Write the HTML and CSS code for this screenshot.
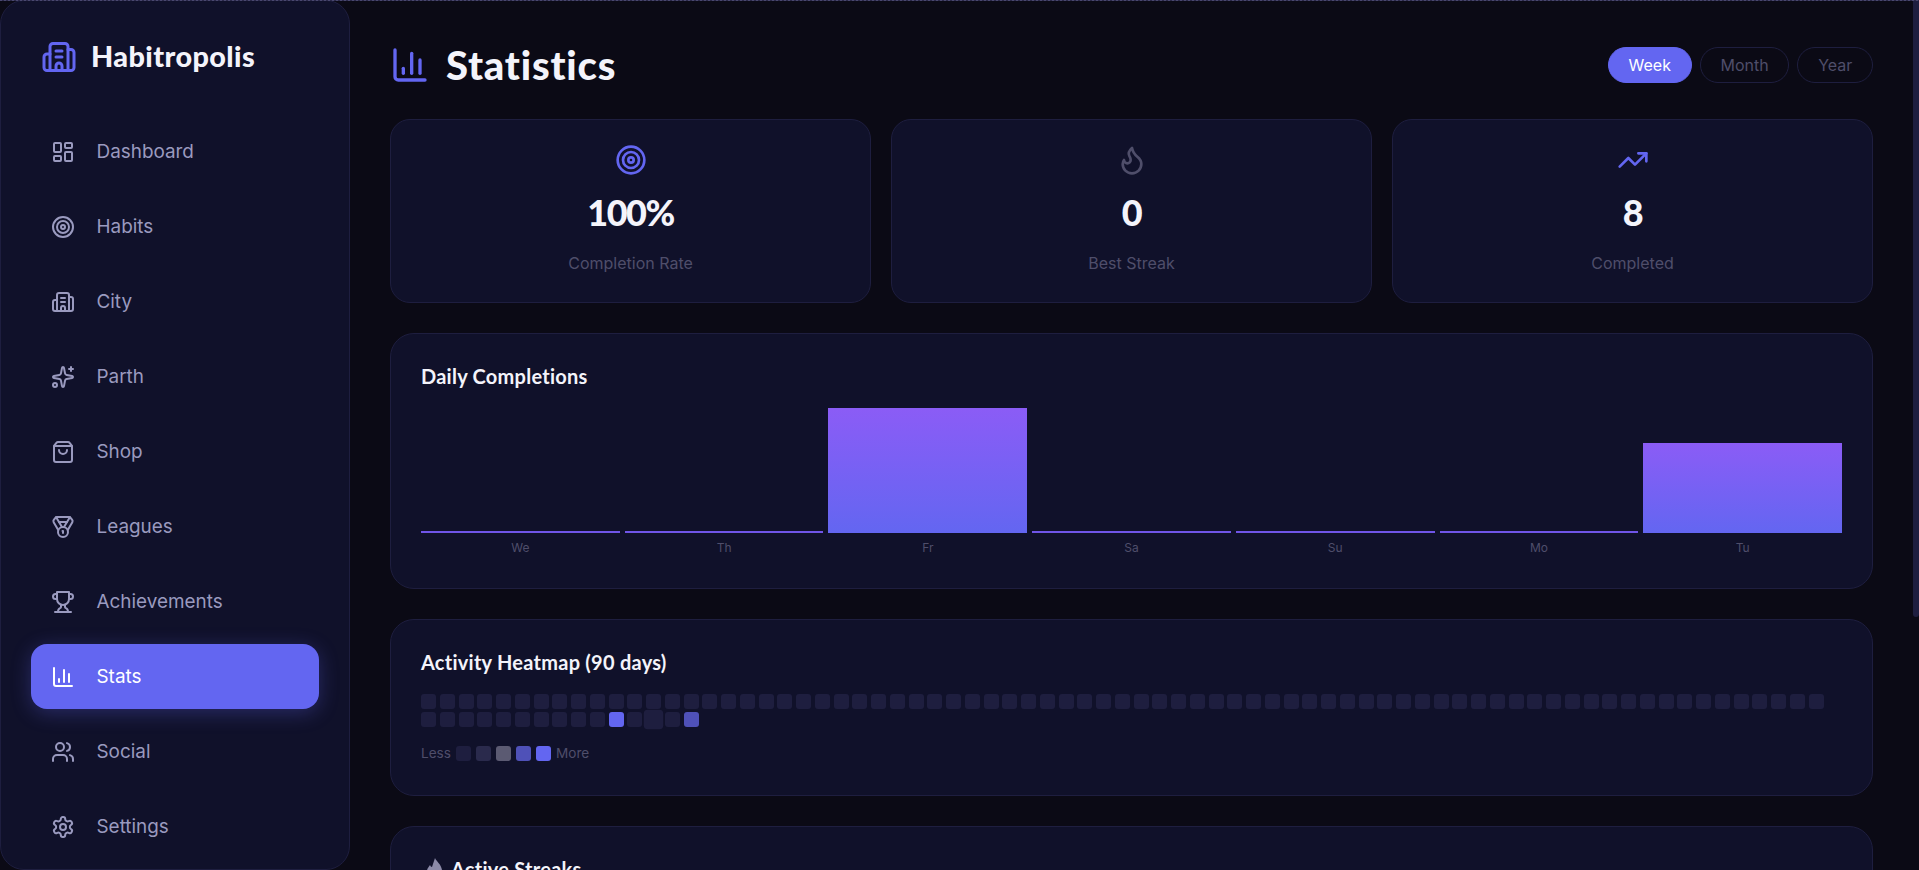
FILE: index.html
```html
<!DOCTYPE html>
<html lang="en">
<head>
    <meta charset="UTF-8">
    <meta name="viewport" content="width=device-width, initial-scale=1.0">
    <title>Habitropolis - Statistics</title>
    <link rel="stylesheet" href="styles.css">
</head>
<body>
    <svg class="icon-defs" width="0" height="0" aria-hidden="true">
        <symbol id="i-building" viewBox="0 0 24 24"><path d="M10 12h4"/><path d="M10 8h4"/><path d="M14 21v-3a2 2 0 0 0-4 0v3"/><path d="M6 10H4a2 2 0 0 0-2 2v7a2 2 0 0 0 2 2h16a2 2 0 0 0 2-2V9a2 2 0 0 0-2-2h-2"/><path d="M6 21V5a2 2 0 0 1 2-2h8a2 2 0 0 1 2 2v16"/></symbol>
        <symbol id="i-dashboard" viewBox="0 0 24 24"><rect x="3" y="3" width="7" height="9" rx="1"/><rect x="14" y="3" width="7" height="5" rx="1"/><rect x="14" y="12" width="7" height="9" rx="1"/><rect x="3" y="16" width="7" height="5" rx="1"/></symbol>
        <symbol id="i-target" viewBox="0 0 24 24"><circle cx="12" cy="12" r="10"/><circle cx="12" cy="12" r="6"/><circle cx="12" cy="12" r="2"/></symbol>
        <symbol id="i-sparkles" viewBox="0 0 24 24"><path d="M11.017 2.814a1 1 0 0 1 1.966 0l1.051 5.558a2 2 0 0 0 1.594 1.594l5.558 1.051a1 1 0 0 1 0 1.966l-5.558 1.051a2 2 0 0 0-1.594 1.594l-1.051 5.558a1 1 0 0 1-1.966 0l-1.051-5.558a2 2 0 0 0-1.594-1.594l-5.558-1.051a1 1 0 0 1 0-1.966l5.558-1.051a2 2 0 0 0 1.594-1.594z"/><path d="M20 2v4"/><path d="M22 4h-4"/><circle cx="4" cy="20" r="2"/></symbol>
        <symbol id="i-bag" viewBox="0 0 24 24"><path d="M16 10a4 4 0 0 1-8 0"/><path d="M3.103 6.034h17.794"/><path d="M3.4 5.467a2 2 0 0 0-.4 1.2V20a2 2 0 0 0 2 2h14a2 2 0 0 0 2-2V6.667a2 2 0 0 0-.4-1.2l-2-2.667A2 2 0 0 0 17 2H7a2 2 0 0 0-1.6.8z"/></symbol>
        <symbol id="i-medal" viewBox="0 0 24 24"><path d="M7.21 15 2.66 7.14a2 2 0 0 1 .13-2.2L4.4 2.8A2 2 0 0 1 6 2h12a2 2 0 0 1 1.6.8l1.6 2.14a2 2 0 0 1 .14 2.2L16.79 15"/><path d="M11 12 5.12 2.2"/><path d="m13 12 5.88-9.8"/><path d="M8 7h8"/><circle cx="12" cy="17" r="5"/><path d="M12 18v-2h-.5"/></symbol>
        <symbol id="i-trophy" viewBox="0 0 24 24"><path d="M6 9H4.5a2.5 2.5 0 0 1 0-5H6"/><path d="M18 9h1.5a2.5 2.5 0 0 0 0-5H18"/><path d="M4 22h16"/><path d="M10 14.66V17c0 .55-.47.98-.97 1.21C7.85 18.75 7 20.24 7 22"/><path d="M14 14.66V17c0 .55.47.98.97 1.21C16.15 18.75 17 20.24 17 22"/><path d="M18 2H6v7a6 6 0 0 0 12 0V2Z"/></symbol>
        <symbol id="i-chart" viewBox="0 0 24 24"><path d="M3 3v16a2 2 0 0 0 2 2h16"/><path d="M18 17V9"/><path d="M13 17V5"/><path d="M8 17v-3"/></symbol>
        <symbol id="i-users" viewBox="0 0 24 24"><path d="M16 21v-2a4 4 0 0 0-4-4H6a4 4 0 0 0-4 4v2"/><circle cx="9" cy="7" r="4"/><path d="M22 21v-2a4 4 0 0 0-3-3.87"/><path d="M16 3.13a4 4 0 0 1 0 7.75"/></symbol>
        <symbol id="i-settings" viewBox="0 0 24 24"><path d="M12.22 2h-.44a2 2 0 0 0-2 2v.18a2 2 0 0 1-1 1.73l-.43.25a2 2 0 0 1-2 0l-.15-.08a2 2 0 0 0-2.73.73l-.22.38a2 2 0 0 0 .73 2.73l.15.1a2 2 0 0 1 1 1.72v.51a2 2 0 0 1-1 1.74l-.15.09a2 2 0 0 0-.73 2.73l.22.38a2 2 0 0 0 2.73.73l.15-.08a2 2 0 0 1 2 0l.43.25a2 2 0 0 1 1 1.73V20a2 2 0 0 0 2 2h.44a2 2 0 0 0 2-2v-.18a2 2 0 0 1 1-1.73l.43-.25a2 2 0 0 1 2 0l.15.08a2 2 0 0 0 2.73-.73l.22-.39a2 2 0 0 0-.73-2.73l-.15-.08a2 2 0 0 1-1-1.74v-.5a2 2 0 0 1 1-1.74l.15-.09a2 2 0 0 0 .73-2.73l-.22-.38a2 2 0 0 0-2.73-.73l-.15.08a2 2 0 0 1-2 0l-.43-.25a2 2 0 0 1-1-1.73V4a2 2 0 0 0-2-2z"/><circle cx="12" cy="12" r="3"/></symbol>
        <symbol id="i-flame" viewBox="0 0 24 24"><path d="M8.5 14.5A2.5 2.5 0 0 0 11 12c0-1.38-.5-2-1-3-1.072-2.143-.224-4.054 2-6 .5 2.5 2 4.9 4 6.5 2 1.6 3 3.5 3 5.5a7 7 0 1 1-14 0c0-1.153.433-2.294 1-3a2.5 2.5 0 0 0 2.5 2.5z"/></symbol>
        <symbol id="i-trending" viewBox="0 0 24 24"><path d="M16 7h6v6"/><path d="m22 7-8.5 8.5-5-5L2 17"/></symbol>
    </svg>

    <div class="top-line"></div>
    <div class="scroll-thumb"></div>

    <div class="app">
        <aside class="sidebar">
            <div class="logo">
                <svg class="icon logo-icon"><use href="#i-building"/></svg>
                <span>Habitropolis</span>
            </div>
            <nav class="nav">
                <a class="nav-item"><svg class="icon"><use href="#i-dashboard"/></svg>Dashboard</a>
                <a class="nav-item"><svg class="icon"><use href="#i-target"/></svg>Habits</a>
                <a class="nav-item"><svg class="icon"><use href="#i-building"/></svg>City</a>
                <a class="nav-item"><svg class="icon"><use href="#i-sparkles"/></svg>Parth</a>
                <a class="nav-item"><svg class="icon"><use href="#i-bag"/></svg>Shop</a>
                <a class="nav-item"><svg class="icon"><use href="#i-medal"/></svg>Leagues</a>
                <a class="nav-item"><svg class="icon"><use href="#i-trophy"/></svg>Achievements</a>
                <a class="nav-item active"><svg class="icon"><use href="#i-chart"/></svg>Stats</a>
                <a class="nav-item"><svg class="icon"><use href="#i-users"/></svg>Social</a>
                <a class="nav-item"><svg class="icon"><use href="#i-settings"/></svg>Settings</a>
            </nav>
        </aside>

        <main class="main">
            <header class="page-header">
                <h1 class="page-title"><svg class="icon title-icon"><use href="#i-chart"/></svg>Statistics</h1>
                <div class="tabs">
                    <button class="tab active">Week</button>
                    <button class="tab">Month</button>
                    <button class="tab">Year</button>
                </div>
            </header>

            <section class="stat-grid">
                <div class="stat-card">
                    <svg class="icon stat-icon"><use href="#i-target"/></svg>
                    <div class="stat-value">100%</div>
                    <div class="stat-label">Completion Rate</div>
                </div>
                <div class="stat-card">
                    <svg class="icon stat-icon muted"><use href="#i-flame"/></svg>
                    <div class="stat-value">0</div>
                    <div class="stat-label">Best Streak</div>
                </div>
                <div class="stat-card">
                    <svg class="icon stat-icon"><use href="#i-trending"/></svg>
                    <div class="stat-value">8</div>
                    <div class="stat-label">Completed</div>
                </div>
            </section>

            <section class="card">
                <h2 class="card-title">Daily Completions</h2>
                <div class="bar-chart">
                    <div class="bar-col"><div class="bar zero"></div><span class="bar-label">We</span></div>
                    <div class="bar-col"><div class="bar zero"></div><span class="bar-label">Th</span></div>
                    <div class="bar-col"><div class="bar full"></div><span class="bar-label">Fr</span></div>
                    <div class="bar-col"><div class="bar zero"></div><span class="bar-label">Sa</span></div>
                    <div class="bar-col"><div class="bar zero"></div><span class="bar-label">Su</span></div>
                    <div class="bar-col"><div class="bar zero"></div><span class="bar-label">Mo</span></div>
                    <div class="bar-col"><div class="bar part"></div><span class="bar-label">Tu</span></div>
                </div>
            </section>

            <section class="card">
                <h2 class="card-title">Activity Heatmap (90 days)</h2>
                <div class="heatmap" id="heatmap"></div>
                <div class="legend">
                    <span>Less</span>
                    <i class="cell"></i>
                    <i class="cell level-1"></i>
                    <i class="cell level-2"></i>
                    <i class="cell level-3"></i>
                    <i class="cell level-4"></i>
                    <span>More</span>
                </div>
            </section>

            <section class="card streaks">
                <h2 class="card-title"><svg class="streak-icon" viewBox="0 0 24 24"><path d="M14 1C15 4 20 7 21 13 22 19 18 24 14 24 10 24 6 20 6 14 6 11 8 10 9 8 9.500 9 10 10 11 10 12 7 13 4 14 1z"/></svg>Active Streaks</h2>
            </section>
        </main>
    </div>

    <script>
        // 90 day heatmap, only a few days have activity
        const heatmap = document.getElementById('heatmap');
        const special = { 85: 'level-4', 87: 'hovered', 89: 'level-3' };
        for (let i = 0; i < 90; i++) {
            const cell = document.createElement('i');
            cell.className = 'cell ' + (special[i] || '');
            heatmap.appendChild(cell);
        }
    </script>
</body>
</html>
```

FILE: styles.css
```css
* {
    margin: 0;
    padding: 0;
    box-sizing: border-box;
}

body {
    font-family: Inter, "Liberation Sans", sans-serif;
    background-color: #0b0a15;
    color: #f4f4fb;
    line-height: 1.7;
}

.icon-defs {
    display: block;
}

.icon {
    width: 24px;
    height: 24px;
    flex-shrink: 0;
    fill: none;
    stroke: currentColor;
    stroke-width: 2;
    stroke-linecap: round;
    stroke-linejoin: round;
}

/* overlays: thin line at the top and the scrollbar thumb */
.top-line {
    position: fixed;
    top: 0;
    left: 0;
    right: 0;
    height: 1px;
    z-index: 10;
    background: repeating-linear-gradient(90deg, #4a4870 0 2px, #2c2a4a 2px 4px);
}

.scroll-thumb {
    position: fixed;
    top: 0;
    right: 0;
    width: 6px;
    height: 617px;
    z-index: 5;
    background: #1e1e3f;
    border-radius: 0 0 3px 3px;
}

.app {
    display: flex;
    align-items: flex-start;
}

/* sidebar */
.sidebar {
    position: sticky;
    top: 0;
    width: 350px;
    height: 100vh;
    flex-shrink: 0;
    padding: 30px;
    background: #10112a;
    border: 1px solid #1e1e3f;
    border-radius: 24px;
    overflow: hidden;
}

.logo {
    display: flex;
    align-items: center;
    gap: 14px;
    height: 52px;
    margin-bottom: 36.4px;
    padding-left: 10px;
    font-family: Lato, sans-serif;
    font-size: 28.8px;
    font-weight: 900;
    letter-spacing: 0.4px;
    line-height: 1;
}

.logo span {
    padding-bottom: 2px;
}

.logo-icon {
    width: 36px;
    height: 36px;
    color: #6366f1;
}

.nav {
    display: flex;
    flex-direction: column;
    gap: 10px;
}

.nav-item {
    display: flex;
    align-items: center;
    gap: 21.5px;
    height: 65px;
    padding: 0 20px;
    border-radius: 16px;
    color: #9a9abf;
    font-size: 18.9px;
}

.nav-item.active {
    background: #6366f1;
    color: #fff;
    box-shadow: 0 4px 20px rgba(99, 102, 241, 0.3);
}

/* main */
.main {
    flex: 1;
    min-width: 0;
    padding: 40px 46px 30px 40px;
}

.page-header {
    display: flex;
    align-items: center;
    justify-content: space-between;
    height: 49px;
    margin-bottom: 30px;
}

.page-title {
    display: flex;
    align-items: center;
    gap: 16px;
    font-family: Lato, sans-serif;
    font-size: 40px;
    font-weight: 900;
    letter-spacing: 0.8px;
    line-height: 1;
}

.title-icon {
    width: 40px;
    height: 40px;
    color: #6366f1;
}

.tabs {
    display: flex;
    gap: 8px;
}

.tab {
    height: 36px;
    padding: 0 19.75px;
    background: transparent;
    border: 1px solid #1e1e3f;
    border-radius: 20px;
    color: #4f4e6a;
    font-family: Inter, sans-serif;
    font-size: 16px;
}

.tab.active {
    background: #6366f1;
    border-color: #6366f1;
    color: #fff;
}

.stat-grid {
    display: grid;
    grid-template-columns: repeat(3, 1fr);
    gap: 20px;
    margin-bottom: 30px;
}

.stat-card {
    display: flex;
    flex-direction: column;
    align-items: center;
    height: 184px;
    padding: 24px;
    background: #10112a;
    border: 1px solid #1e1e3f;
    border-radius: 20px;
}

.stat-icon {
    width: 32px;
    height: 32px;
    color: #6366f1;
}

.stat-icon.muted {
    color: #4f4e6a;
}

.stat-value {
    margin-top: 11px;
    font-family: Lato, sans-serif;
    font-size: 36px;
    font-weight: 900;
    letter-spacing: -1.5px;
    line-height: 50px;
}

.stat-label {
    margin-top: 13px;
    color: #4f4e6a;
    font-size: 16px;
}

.card {
    margin-bottom: 30px;
    padding: 30px;
    background: #10112a;
    border: 1px solid #1e1e3f;
    border-radius: 24px;
}

.card-title {
    display: flex;
    align-items: center;
    height: 24px;
    margin-bottom: 20px;
    font-family: Lato, sans-serif;
    font-size: 20px;
    font-weight: 700;
    letter-spacing: 0.25px;
    line-height: 1;
}

.bar-chart {
    display: flex;
    gap: 5px;
    height: 150px;
}

.bar-col {
    flex: 1;
    display: flex;
    flex-direction: column;
    justify-content: flex-end;
    align-items: stretch;
}

.bar {
    background: linear-gradient(180deg, #8b5cf6, #6366f1);
}

.bar.zero {
    height: 2px;
    background: #7055e8;
}

.bar.full {
    height: 125px;
}

.bar.part {
    height: 90px;
}

.bar-label {
    height: 25px;
    padding-top: 6px;
    color: #4f4e6a;
    font-size: 12px;
    line-height: 18px;
    text-align: center;
}

.heatmap {
    display: flex;
    flex-wrap: wrap;
    gap: 3px 3.75px;
}

.cell {
    display: block;
    width: 15px;
    height: 15px;
    flex-shrink: 0;
    border-radius: 3px;
    background: #1e1e3f;
}

.cell.hovered {
    transform: scale(1.3);
}

.cell.level-1 {
    background: #2a2a4c;
}

.cell.level-2 {
    background: #5b5a72;
}

.cell.level-3 {
    background: #4f51b8;
}

.cell.level-4 {
    background: #6366f1;
}

.legend {
    display: flex;
    align-items: center;
    gap: 5px;
    margin-top: 15px;
    color: #4f4e6a;
    font-size: 13.6px;
}

.streaks {
    height: 380px;
}

.streak-icon {
    width: 24px;
    height: 24px;
    margin-right: 6px;
    flex-shrink: 0;
    fill: #8c8aa8;
}
```
